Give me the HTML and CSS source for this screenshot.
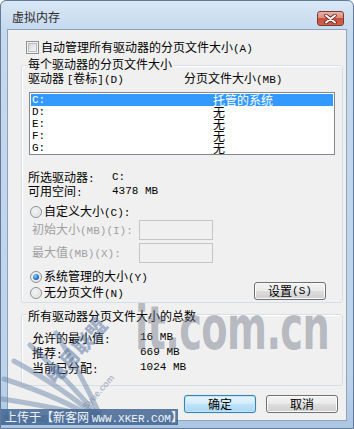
FILE: index.html
```html
<!DOCTYPE html>
<html lang="zh-CN">
<head>
<meta charset="utf-8">
<title>虚拟内存</title>
<link rel="stylesheet" href="styles.css">
</head>
<body>
<div class="window">
  <div class="titlebar">
    <span class="title">虚拟内存</span>
    <div class="close">
      <svg width="13" height="10" viewBox="0 0 13 10">
        <path d="M2 1.5 L11 8.5 M11 1.5 L2 8.5" stroke="#6b2a22" stroke-width="3.6" stroke-linecap="round"/>
        <path d="M2 1.5 L11 8.5 M11 1.5 L2 8.5" stroke="#ffffff" stroke-width="2" stroke-linecap="round"/>
      </svg>
    </div>
  </div>
  <div class="client">
    <div class="check-row">
      <span class="checkbox"></span>
      <span class="txt">自动管理所有驱动器的分页文件大小<span class="l">(A)</span></span>
    </div>

    <div class="group g1">
      <div class="legend">每个驱动器的分页文件大小</div>
      <div class="cols">
        <span class="col1">驱动器 <span class="l">[</span>卷标<span class="l">](D)</span></span>
        <span class="col2">分页文件大小<span class="l">(MB)</span></span>
      </div>
      <div class="list">
        <div class="row sel"><span class="r1 l">C:</span><span class="r2">托管的系统</span></div>
        <div class="row"><span class="r1 l">D:</span><span class="r2">无</span></div>
        <div class="row"><span class="r1 l">E:</span><span class="r2">无</span></div>
        <div class="row"><span class="r1 l">F:</span><span class="r2">无</span></div>
        <div class="row"><span class="r1 l">G:</span><span class="r2">无</span></div>
      </div>
      <div class="info first"><span class="ik">所选驱动器<span class="l">:</span></span><span class="l">C:</span></div>
      <div class="info"><span class="ik">可用空间<span class="l">:</span></span><span class="l">4378 MB</span></div>
      <div class="radio-row custom"><span class="radio"></span><span>自定义大小<span class="l">(C):</span></span></div>
      <div class="field f1"><span class="fk">初始大小<span class="l">(MB)(I):</span></span><span class="textbox"></span></div>
      <div class="field f2"><span class="fk">最大值<span class="l">(MB)(X):</span></span><span class="textbox"></span></div>
      <div class="bottom-row">
        <div class="radios">
          <div class="radio-row"><span class="radio on"></span><span>系统管理的大小<span class="l">(Y)</span></span></div>
          <div class="radio-row"><span class="radio"></span><span>无分页文件<span class="l">(N)</span></span></div>
        </div>
        <button class="btn set">设置<span class="l">(S)</span></button>
      </div>
    </div>

    <div class="group g2">
      <div class="legend">所有驱动器分页文件大小的总数</div>
      <div class="total first"><span class="tk">允许的最小值<span class="l">:</span></span><span class="l">16 MB</span></div>
      <div class="total"><span class="tk">推荐<span class="l">:</span></span><span class="l">669 MB</span></div>
      <div class="total"><span class="tk">当前已分配<span class="l">:</span></span><span class="l">1024 MB</span></div>
    </div>

    <div class="buttons">
      <button class="btn default">确定</button>
      <button class="btn">取消</button>
    </div>
  </div>

  <div class="wm-it">it.com.cn</div>
  <svg class="wm-wing" width="130" height="100" viewBox="0 0 130 100">
    <g stroke="rgba(110,135,170,0.5)" stroke-width="5" stroke-linecap="round" fill="none">
      <path d="M95 92 Q60 70 4 52"/>
      <path d="M92 90 Q55 80 2 72"/>
      <path d="M90 93 Q50 90 6 90"/>
      <path d="M97 88 Q70 55 30 18"/>
      <path d="M99 86 Q80 45 56 6"/>
      <path d="M96 90 Q65 62 14 34"/>
    </g>
  </svg>
  <div class="wm-cn">电月联盟</div>
  <div class="wm-syue">Syue.com</div>
  <div class="wm-bar">上传于【新客网 <span class="l">WWW.XKER.COM</span>】</div>
</div>
</body>
</html>
```

FILE: styles.css
```css
* { box-sizing: border-box; }
html, body { margin: 0; padding: 0; }
body {
  width: 354px;
  height: 429px;
  overflow: hidden;
  background: #ffffff;
  font-family: "Noto Sans CJK SC", "Liberation Sans", sans-serif;
  font-size: 12px;
  line-height: 14px;
  color: #000;
}
.l {
  font-family: "Liberation Mono", "Noto Sans CJK SC", monospace;
  font-size: 11px;
}

.window {
  position: relative;
  width: 354px;
  height: 429px;
  border: 1px solid #62799a;
  border-radius: 6px 6px 0 0;
  background: linear-gradient(#d9e7f6 0px, #c5d9ee 30px, #bcd3ea 380px, #aac4e2 429px);
  display: flex;
  flex-direction: column;
  overflow: hidden;
}

.titlebar {
  height: 28px;
  flex: none;
  display: flex;
  align-items: flex-start;
  padding-left: 11px;
}
.title {
  margin-top: 9px;
  color: #2a2a2a;
}
.close {
  margin-left: auto;
  margin-top: 10px;
  margin-right: 9px;
  width: 27px;
  height: 15px;
  border: 1px solid #7b3a30;
  border-radius: 3px;
  background: linear-gradient(#eab3a8 0%, #dc8d7c 45%, #c9513e 50%, #cf6248 100%);
  display: flex;
  align-items: center;
  justify-content: center;
}

.client {
  position: relative;
  flex: 1;
  margin: 0 6px 7px 6px;
  border: 1px solid #8fa3bb;
  background: #f0f0f0;
  display: flex;
  flex-direction: column;
}

/* checkbox row */
.check-row {
  margin-top: 11px;
  padding-left: 18px;
  display: flex;
  align-items: center;
  height: 13px;
  gap: 2px;
}
.checkbox {
  width: 13px;
  height: 13px;
  flex: none;
  border: 1px solid #8e8f8f;
  background: linear-gradient(135deg, #cbcfd5 0%, #e6e8eb 50%, #f8f8f8 100%);
  box-shadow: inset 0 0 0 1px #f4f4f4, inset 0 0 0 2px #b8bdc3;
}

/* group boxes */
.group {
  margin-left: 13px;
  width: 322px;
  border: 1px solid #d5dfe5;
  border-radius: 3px;
  box-shadow: inset 1px 1px 0 #ffffff;
  display: flex;
  flex-direction: column;
}
.legend {
  align-self: flex-start;
  margin-left: 5px;
  padding: 0 1px;
  background: #f0f0f0;
  height: 14px;
}
.g1 {
  margin-top: 11px;
  height: 238px;
}
.g1 .legend { margin-top: -9px; }

.cols {
  display: flex;
  padding-left: 6px;
  height: 14px;
}
.col1 { width: 156px; }

.list {
  margin-top: 7px;
  margin-left: 7px;
  width: 306px;
  height: 63px;
  border: 1px solid #828790;
  background: #ffffff;
  padding-top: 1px;
}
.row {
  margin: 0 1px;
  height: 12px;
  line-height: 12px;
  padding-left: 1px;
  display: flex;
  overflow: visible;
}
.row.sel {
  background: #3399ff;
  color: #ffffff;
}
.r1 { width: 181px; }

.info {
  display: flex;
  padding-left: 6px;
  height: 14px;
}
.info.first { margin-top: 15px; }
.ik { width: 84px; }

.radio-row {
  display: flex;
  align-items: center;
  height: 14px;
  padding-left: 8px;
  gap: 2px;
}
.radio-row.custom { margin-top: 7px; }
.radio {
  width: 12px;
  height: 12px;
  flex: none;
  border-radius: 50%;
  border: 1px solid #8e8f8f;
  background: radial-gradient(circle at 40% 40%, #f6f6f6 0%, #e0e2e5 60%, #c9cdd2 100%);
  box-shadow: inset 0 0 0 1px #f3f3f3;
  position: relative;
}
.radio.on::after {
  content: "";
  position: absolute;
  left: 2px;
  top: 2px;
  width: 6px;
  height: 6px;
  border-radius: 50%;
  background: radial-gradient(circle at 35% 35%, #8fd0ff 0%, #2a76c8 55%, #154a8a 100%);
}

.field {
  display: flex;
  align-items: center;
  height: 20px;
  padding-left: 10px;
  color: #a0a0a0;
}
.field.f1 { margin-top: 1px; }
.field.f2 { margin-top: 3px; }
.fk { width: 107px; }
.textbox {
  width: 74px;
  height: 20px;
  border: 1px solid #c6c6c6;
  background: #f0f0f0;
}

.bottom-row {
  margin-top: 7px;
  display: flex;
  align-items: flex-start;
}
.radios {
  display: flex;
  flex-direction: column;
  gap: 2px;
}

.btn {
  width: 72px;
  height: 18px;
  padding: 0;
  margin: 0;
  font: inherit;
  font-size: 12px;
  line-height: 16px;
  color: #000;
  border: 1px solid #707070;
  border-radius: 3px;
  background: linear-gradient(#f2f2f2 0%, #ebebeb 48%, #dddddd 52%, #cfcfcf 100%);
  box-shadow: inset 0 0 0 1px #fbfbfb;
  display: flex;
  align-items: center;
  justify-content: center;
}
.btn.set {
  margin-left: auto;
  margin-right: 16px;
  margin-top: 12px;
}
.btn.default {
  border-color: #3c7fb1;
  background: linear-gradient(#e5f4fc 0%, #d3ecfa 48%, #bde3f8 52%, #a9d8f4 100%);
  box-shadow: inset 0 0 0 1px #bfe7fd, 0 0 1px #7ec0ea;
}

.g2 {
  margin-top: 11px;
  height: 72px;
}
.g2 .legend { margin-top: -6px; }
.total {
  display: flex;
  padding-left: 10px;
  height: 15px;
  line-height: 15px;
}
.total.first { margin-top: 7px; }
.tk { width: 108px; }

.buttons {
  margin-top: 9px;
  display: flex;
  justify-content: flex-end;
  gap: 10px;
  padding-right: 8px;
}

/* watermarks (overlays) */
.wm-it {
  position: absolute;
  left: 134px;
  top: 292px;
  font-family: "DejaVu Sans", "Liberation Sans", sans-serif;
  font-weight: 700;
  font-size: 60px;
  line-height: 70px;
  letter-spacing: -1px;
  color: rgba(100, 108, 122, 0.42);
  transform: scaleX(0.64);
  transform-origin: left top;
  white-space: nowrap;
  pointer-events: none;
}
.wm-wing {
  position: absolute;
  left: -1px;
  top: 326px;
  pointer-events: none;
}
.wm-cn {
  position: absolute;
  left: 40px;
  top: 372px;
  font-size: 20px;
  line-height: 22px;
  font-weight: 900;
  color: rgba(80, 110, 155, 0.5);
  transform: rotate(-48deg);
  transform-origin: left top;
  white-space: nowrap;
  pointer-events: none;
}
.wm-syue {
  position: absolute;
  left: 78px;
  top: 402px;
  font-family: "Liberation Sans", sans-serif;
  font-size: 9px;
  font-weight: 700;
  color: rgba(110, 130, 160, 0.5);
  transform: rotate(-48deg);
  transform-origin: left top;
  white-space: nowrap;
  pointer-events: none;
}
.wm-bar {
  position: absolute;
  left: -1px;
  top: 408px;
  width: 178px;
  height: 16px;
  padding-left: 5px;
  background: rgba(60, 96, 142, 0.82);
  color: #eef3f9;
  line-height: 16px;
  white-space: nowrap;
  pointer-events: none;
}
```
